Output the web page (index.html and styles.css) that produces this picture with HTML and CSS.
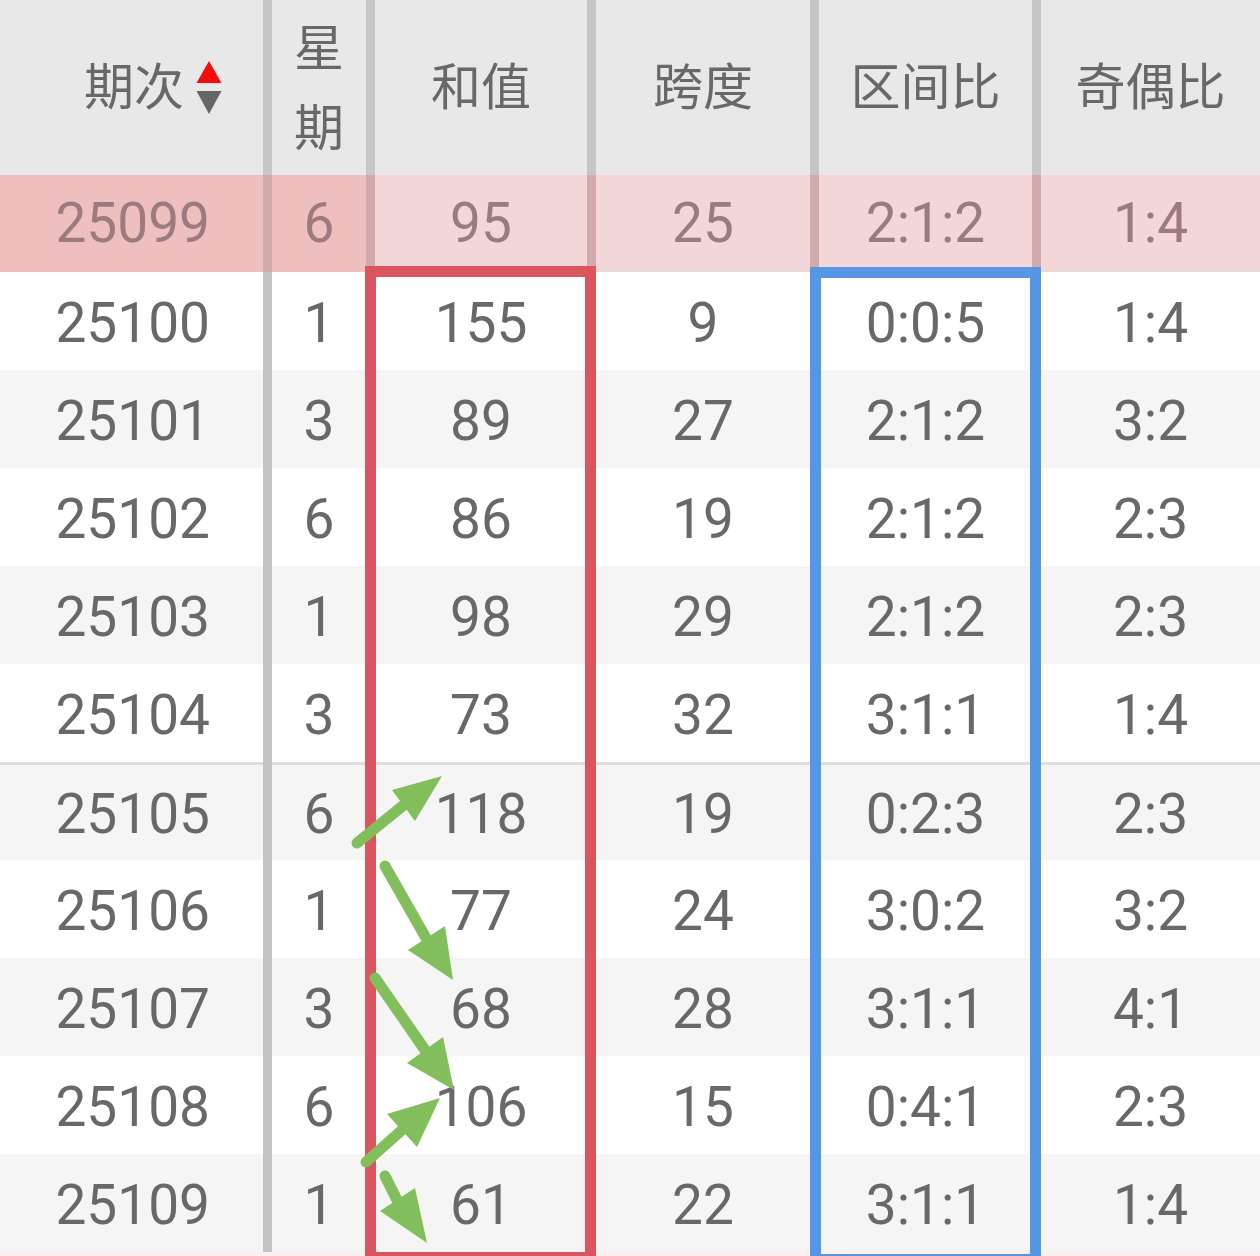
FILE: index.html
```html
<!DOCTYPE html>
<html lang="zh-CN">
<head>
<meta charset="utf-8">
<title>和值走势</title>
<link rel="stylesheet" href="styles.css">
</head>
<body>
<div class="table">
  <div class="row head">
    <div class="cell c1"><span>期次</span>
      <svg class="sort" width="26" height="54" viewBox="0 0 26 54"><polygon points="13,0 25.5,22 0.5,22" fill="#f20d0d"/><polygon points="0.5,30 25.5,30 13,53" fill="#666"/></svg>
    </div>
    <div class="cell c2 wrap">星期</div>
    <div class="cell">和值</div>
    <div class="cell">跨度</div>
    <div class="cell">区间比</div>
    <div class="cell">奇偶比</div>
  </div>
  <div class="row hl">
    <div class="cell c1">25099</div><div class="cell c2">6</div><div class="cell">95</div><div class="cell">25</div><div class="cell">2:1:2</div><div class="cell">1:4</div>
  </div>
  <div class="row">
    <div class="cell c1">25100</div><div class="cell c2">1</div><div class="cell">155</div><div class="cell">9</div><div class="cell">0:0:5</div><div class="cell">1:4</div>
  </div>
  <div class="row alt">
    <div class="cell c1">25101</div><div class="cell c2">3</div><div class="cell">89</div><div class="cell">27</div><div class="cell">2:1:2</div><div class="cell">3:2</div>
  </div>
  <div class="row">
    <div class="cell c1">25102</div><div class="cell c2">6</div><div class="cell">86</div><div class="cell">19</div><div class="cell">2:1:2</div><div class="cell">2:3</div>
  </div>
  <div class="row alt">
    <div class="cell c1">25103</div><div class="cell c2">1</div><div class="cell">98</div><div class="cell">29</div><div class="cell">2:1:2</div><div class="cell">2:3</div>
  </div>
  <div class="row">
    <div class="cell c1">25104</div><div class="cell c2">3</div><div class="cell">73</div><div class="cell">32</div><div class="cell">3:1:1</div><div class="cell">1:4</div>
  </div>
  <div class="row alt split">
    <div class="cell c1">25105</div><div class="cell c2">6</div><div class="cell">118</div><div class="cell">19</div><div class="cell">0:2:3</div><div class="cell">2:3</div>
  </div>
  <div class="row">
    <div class="cell c1">25106</div><div class="cell c2">1</div><div class="cell">77</div><div class="cell">24</div><div class="cell">3:0:2</div><div class="cell">3:2</div>
  </div>
  <div class="row alt">
    <div class="cell c1">25107</div><div class="cell c2">3</div><div class="cell">68</div><div class="cell">28</div><div class="cell">3:1:1</div><div class="cell">4:1</div>
  </div>
  <div class="row">
    <div class="cell c1">25108</div><div class="cell c2">6</div><div class="cell">106</div><div class="cell">15</div><div class="cell">0:4:1</div><div class="cell">2:3</div>
  </div>
  <div class="row alt">
    <div class="cell c1">25109</div><div class="cell c2">1</div><div class="cell">61</div><div class="cell">22</div><div class="cell">3:1:1</div><div class="cell">1:4</div>
  </div>
  <div class="row tail"></div>

  <div class="box box-red"></div>
  <div class="box box-blue"></div>

  <svg class="arrows" width="1260" height="1256" viewBox="0 0 1260 1256">
    <g stroke="#82bf5c" stroke-width="11" stroke-linecap="round" fill="none">
      <line x1="357" y1="843" x2="405" y2="804"/>
      <line x1="385" y1="866" x2="426" y2="938"/>
      <line x1="375" y1="978" x2="425" y2="1050"/>
      <line x1="366" y1="1162" x2="402" y2="1130"/>
      <line x1="385" y1="1176" x2="397" y2="1200"/>
    </g>
    <g fill="#82bf5c">
      <polygon points="442,776 392,790 415,821"/>
      <polygon points="453,980 408,950 445,926"/>
      <polygon points="454,1090 407,1063 443,1037"/>
      <polygon points="440,1098 387,1114 417,1147"/>
      <polygon points="427,1243 380,1211 415,1188"/>
    </g>
  </svg>
</div>
</body>
</html>
```
FILE: styles.css
```css
html, body {
  margin: 0;
  padding: 0;
  background: #fff;
}
body {
  width: 1260px;
  height: 1256px;
  overflow: hidden;
  font-family: Roboto, "Noto Sans CJK SC", sans-serif;
  color: #686868;
}
.table {
  position: relative;
  width: 1260px;
}
.row {
  display: grid;
  grid-template-columns: 272px 103px 221px 223px 222px 219px;
  height: 98px;
  box-sizing: border-box;
  background: #fff;
}
.row.alt {
  background: #f5f5f5;
}
.row.split .cell {
  box-shadow: inset 0 3px 0 #dedede;
  padding-top: 7px;
}
.cell {
  display: flex;
  align-items: center;
  justify-content: center;
  border-right: 9px solid #c3c3c3;
  font-size: 55px;
  line-height: 1;
  padding-top: 4px;
  box-sizing: border-box;
  white-space: nowrap;
}
.cell:last-child {
  border-right: 0;
}
.cell.c1 {
  justify-content: flex-end;
  padding-right: 53px;
}
.head {
  height: 175px;
  background: #e8e8e8;
}
.head .cell {
  font-family: "Noto Sans CJK SC", sans-serif;
  font-size: 50px;
  line-height: 80px;
  padding-top: 0;
  padding-bottom: 10px;
  border-right-color: #c6c6c6;
}
.head .cell.c1 {
  padding-right: 41px;
  gap: 12px;
}
.head .cell.wrap {
  white-space: normal;
  text-align: center;
  word-break: break-all;
  padding: 0 20px 8px;
}
.sort {
  display: block;
  margin-top: 10px;
}
.hl {
  height: 97px;
  background: #f2d6d8;
  color: #9b7b7d;
  box-shadow: inset 0 -2px 0 #e6dada;
}
.hl .cell {
  border-right-color: #d3aaac;
  padding-top: 0;
}
.hl .cell.c1,
.hl .cell.c2 {
  background: #efbfc0;
}
.row.tail {
  height: 10px;
  background: #fcefec;
}
.box {
  position: absolute;
  box-sizing: border-box;
  border: 11px solid;
}
.box-red {
  left: 365px;
  top: 266px;
  width: 231px;
  height: 997px;
  border-color: #da555d;
}
.box-blue {
  left: 810px;
  top: 267px;
  width: 231px;
  height: 998px;
  border-color: #5597e6;
}
.arrows {
  position: absolute;
  left: 0;
  top: 0;
  pointer-events: none;
}
```
